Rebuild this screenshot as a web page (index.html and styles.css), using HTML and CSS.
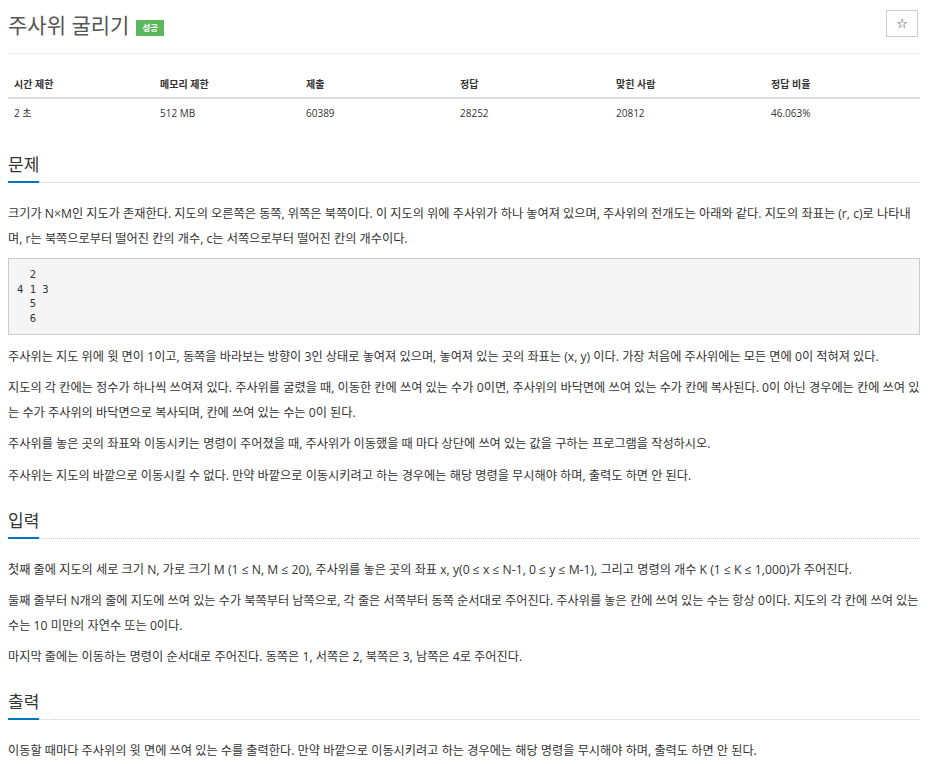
FILE: index.html
```html
<!DOCTYPE html>
<html lang="ko">
<head>
<meta charset="utf-8">
<title>주사위 굴리기</title>
<link rel="stylesheet" href="styles.css">
</head>
<body>
<div class="page">
  <div class="page-header">
    <h1 class="title">주사위 굴리기 <span class="badge">성공</span></h1>
    <button class="star" type="button">☆</button>
  </div>

  <table class="info">
    <thead>
      <tr>
        <th class="c1">시간 제한</th>
        <th class="c2">메모리 제한</th>
        <th class="c3">제출</th>
        <th class="c4">정답</th>
        <th class="c5">맞힌 사람</th>
        <th class="c6">정답 비율</th>
      </tr>
    </thead>
    <tbody>
      <tr>
        <td>2 초</td>
        <td>512 MB</td>
        <td>60389</td>
        <td>28252</td>
        <td>20812</td>
        <td>46.063%</td>
      </tr>
    </tbody>
  </table>

  <section class="section">
    <div class="headline"><h2>문제</h2></div>
    <div class="text">
      <p>크기가 N×M인 지도가 존재한다. 지도의 오른쪽은 동쪽, 위쪽은 북쪽이다. 이 지도의 위에 주사위가 하나 놓여져 있으며, 주사위의 전개도는 아래와 같다. 지도의 좌표는 (r, c)로 나타내며, r는 북쪽으로부터 떨어진 칸의 개수, c는 서쪽으로부터 떨어진 칸의 개수이다.</p>
<pre>  2
4 1 3
  5
  6</pre>
      <p>주사위는 지도 위에 윗 면이 1이고, 동쪽을 바라보는 방향이 3인 상태로 놓여져 있으며, 놓여져 있는 곳의 좌표는 (x, y) 이다. 가장 처음에 주사위에는 모든 면에 0이 적혀져 있다.</p>
      <p>지도의 각 칸에는 정수가 하나씩 쓰여져 있다. 주사위를 굴렸을 때, 이동한 칸에 쓰여 있는 수가 0이면, 주사위의 바닥면에 쓰여 있는 수가 칸에 복사된다. 0이 아닌 경우에는 칸에 쓰여 있는 수가 주사위의 바닥면으로 복사되며, 칸에 쓰여 있는 수는 0이 된다.</p>
      <p>주사위를 놓은 곳의 좌표와 이동시키는 명령이 주어졌을 때, 주사위가 이동했을 때 마다 상단에 쓰여 있는 값을 구하는 프로그램을 작성하시오.</p>
      <p>주사위는 지도의 바깥으로 이동시킬 수 없다. 만약 바깥으로 이동시키려고 하는 경우에는 해당 명령을 무시해야 하며, 출력도 하면 안 된다.</p>
    </div>
  </section>

  <section class="section">
    <div class="headline"><h2>입력</h2></div>
    <div class="text">
      <p>첫째 줄에 지도의 세로 크기 N, 가로 크기 M (1 ≤ N, M ≤ 20), 주사위를 놓은 곳의 좌표 x, y(0 ≤ x ≤ N-1, 0 ≤ y ≤ M-1), 그리고 명령의 개수 K (1 ≤ K ≤ 1,000)가 주어진다.</p>
      <p>둘째 줄부터 N개의 줄에 지도에 쓰여 있는 수가 북쪽부터 남쪽으로, 각 줄은 서쪽부터 동쪽 순서대로 주어진다. 주사위를 놓은 칸에 쓰여 있는 수는 항상 0이다. 지도의 각 칸에 쓰여 있는 수는 10 미만의 자연수 또는 0이다.</p>
      <p>마지막 줄에는 이동하는 명령이 순서대로 주어진다. 동쪽은 1, 서쪽은 2, 북쪽은 3, 남쪽은 4로 주어진다.</p>
    </div>
  </section>

  <section class="section">
    <div class="headline"><h2>출력</h2></div>
    <div class="text">
      <p>이동할 때마다 주사위의 윗 면에 쓰여 있는 수를 출력한다. 만약 바깥으로 이동시키려고 하는 경우에는 해당 명령을 무시해야 하며, 출력도 하면 안 된다.</p>
    </div>
  </section>
</div>
</body>
</html>
```

FILE: styles.css
```css
* { box-sizing: border-box; }

html, body {
  margin: 0;
  padding: 0;
  background: #fff;
}

body {
  font-family: "Open Sans", "Noto Sans CJK KR", sans-serif;
  color: #333;
  font-size: 13px;
}

.page {
  width: 912px;
  margin-left: 8px;
}

.page-header {
  display: flex;
  justify-content: space-between;
  align-items: flex-start;
  border-bottom: 1px solid #eee;
  padding-top: 9px;
  height: 54px;
}

.title {
  margin: 0;
  font-weight: 400;
  font-size: 21px;
  line-height: 32px;
  color: #555;
  display: flex;
  align-items: center;
  gap: 7px;
}

.badge {
  display: inline-block;
  background: #5cb85c;
  color: #fff;
  font-size: 8.5px;
  font-weight: 700;
  line-height: 16px;
  padding: 0 6px;
  margin-top: 6px;
}

.star {
  width: 32px;
  height: 27px;
  margin-top: 1px;
  margin-right: 2px;
  border: 1px solid #ccc;
  background: #fff;
  color: #222;
  font-size: 13px;
  padding: 0;
  font-family: "DejaVu Sans", sans-serif;
}

.info {
  border-collapse: collapse;
  width: 912px;
  margin-top: 15px;
  margin-bottom: 19px;
  font-size: 10px;
}

.info th, .info td {
  text-align: left;
  padding: 0 6px;
}

.info th {
  font-weight: 700;
  height: 29px;
  vertical-align: middle;
  border-bottom: 2px solid #ddd;
}

.info td {
  height: 28px;
  vertical-align: middle;
}

.c1 { width: 146px; }
.c2 { width: 146px; }
.c3 { width: 154px; }
.c4 { width: 156px; }
.c5 { width: 155px; }
.c6 { width: 155px; }

.section {
  margin-top: 12px;
}

.headline {
  border-bottom: 1px dotted #ccc;
  height: 38px;
}

.headline h2 {
  margin: 0;
  display: inline-block;
  font-size: 17px;
  font-weight: 400;
  line-height: 30px;
  padding-top: 5px;
  color: #333;
  border-bottom: 2px solid #0076c0;
  height: 38px;
}

.text {
  padding-top: 19px;
}

.text p {
  margin: 0 0 7px;
  line-height: 24.6px;
  font-size: 12.2px;
}

pre {
  margin: 2px 0 10px;
  padding: 8px 8px;
  font-family: "DejaVu Sans Mono", monospace;
  font-size: 10.5px;
  line-height: 14.6px;
  background: #f5f5f5;
  border: 1px solid #ccc;
  color: #333;
}
```
